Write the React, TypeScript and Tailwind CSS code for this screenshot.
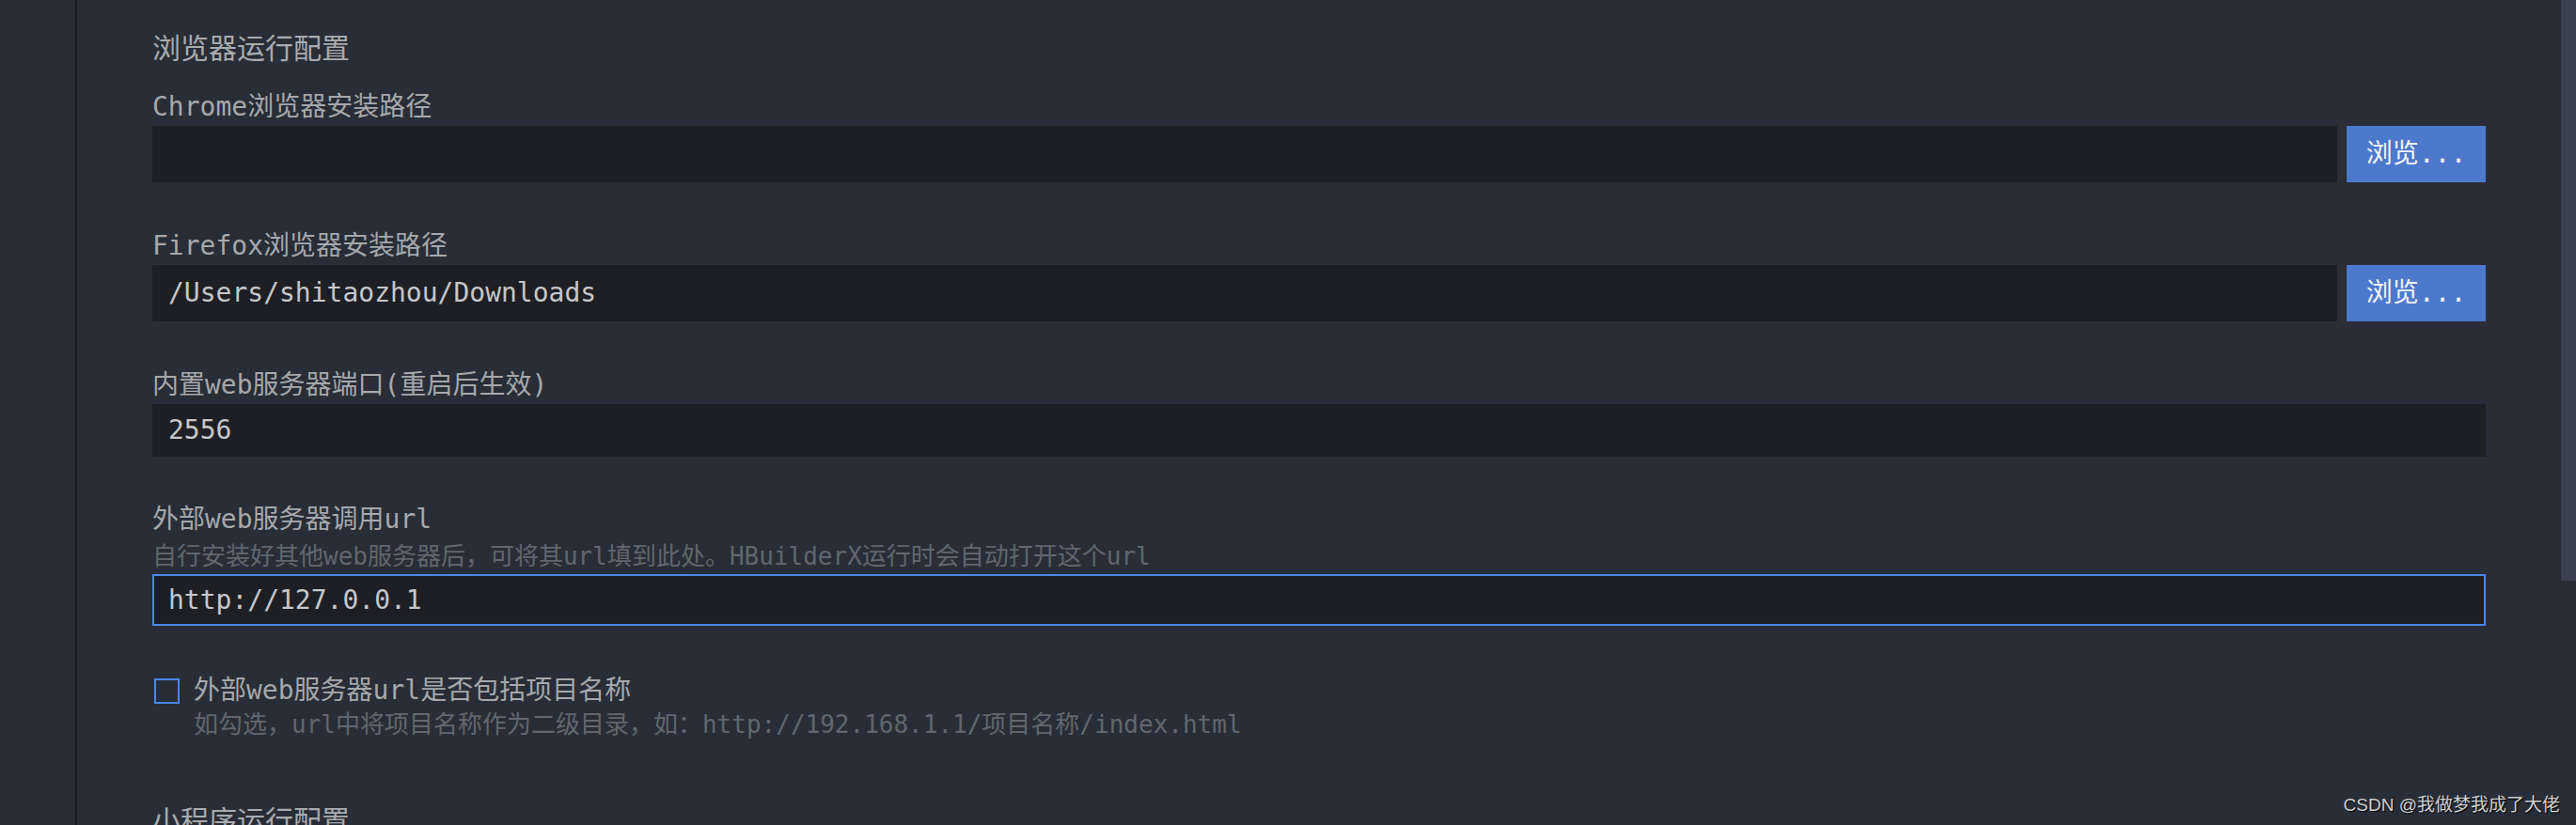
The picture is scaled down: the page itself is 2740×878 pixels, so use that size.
import type { ReactNode } from "react";

const mono = "font-['DejaVu_Sans_Mono','Noto_Sans_CJK_SC',monospace]";

function Label({ children, className = "" }: { children: ReactNode; className?: string }) {
  return <div className={`h-[40px] shrink-0 text-[28px] leading-[40px] text-[#a6a8ab] ${className}`}>{children}</div>;
}

function PathRow({ value }: { value: string }) {
  return (
    <div className="flex h-[60px] shrink-0 gap-[10px]">
      <div className="flex flex-1 items-center bg-[#1e1f24] px-[17px] text-[28px] text-[#c6c7c9]">{value}</div>
      <button
        type="button"
        className="w-[148px] bg-[#4d79cc] text-center text-[28px] text-[#f2f4f8]"
      >
        浏览...
      </button>
    </div>
  );
}

export default function App() {
  return (
    <div className={`relative flex h-[878px] w-[2740px] overflow-hidden bg-[#292d37] ${mono}`}>
      {/* left nav strip */}
      <div className="w-[80px] shrink-0 bg-[#292d37]" />
      <div className="w-[2px] shrink-0 bg-[#1a1c21]" />

      <div className="flex flex-1 flex-col pl-[80px] pr-[80px] pt-[32px]">
        <div className="h-[40px] shrink-0 text-[30px] leading-[40px] text-[#a9abae]">浏览器运行配置</div>

        <Label className="mt-[22px]">Chrome浏览器安装路径</Label>
        <PathRow value="" />

        <Label className="mt-[48px]">Firefox浏览器安装路径</Label>
        <PathRow value="/Users/shitaozhou/Downloads" />

        <Label className="mt-[48px]">内置web服务器端口(重启后生效)</Label>
        <div className="flex h-[56px] shrink-0 items-center bg-[#1e1f24] px-[17px] text-[28px] text-[#c6c7c9]">2556</div>

        <Label className="mt-[47px]">外部web服务器调用url</Label>
        <div className="h-[38px] shrink-0 text-[26px] leading-[38px] text-[#62666d]">
          自行安装好其他web服务器后，可将其url填到此处。HBuilderX运行时会自动打开这个url
        </div>
        <div className="flex h-[55px] shrink-0 items-center border-2 border-[#4a86f0] bg-[#1e1f24] px-[15px] text-[28px] text-[#c6c7c9]">
          http://127.0.0.1
        </div>

        <div className="mt-[49px] flex h-[40px] shrink-0 items-center gap-[15px]">
          <div className="ml-[2px] h-[27px] w-[27px] border-2 border-[#4a86f0]" />
          <span className="text-[28px] leading-[40px] text-[#a6a8ab]">外部web服务器url是否包括项目名称</span>
        </div>
        <div className="h-[32px] shrink-0 pl-[44px] text-[26px] leading-[32px] text-[#62666d]">
          如勾选，url中将项目名称作为二级目录，如：http://192.168.1.1/项目名称/index.html
        </div>

        <div className="mt-[67px] h-[40px] shrink-0 text-[30px] leading-[40px] text-[#a9abae]">小程序运行配置</div>
      </div>

      {/* scrollbar */}
      <div className="w-[16px] shrink-0">
        <div className="h-[618px] w-full bg-[#394050]" />
      </div>

      <div className="absolute bottom-[7px] right-[17px] font-['Liberation_Sans','Noto_Sans_CJK_SC',sans-serif] text-[19px] text-[#d0d0d0] [text-shadow:1px_1px_1px_#000]">
        CSDN @我做梦我成了大佬
      </div>
    </div>
  );
}
